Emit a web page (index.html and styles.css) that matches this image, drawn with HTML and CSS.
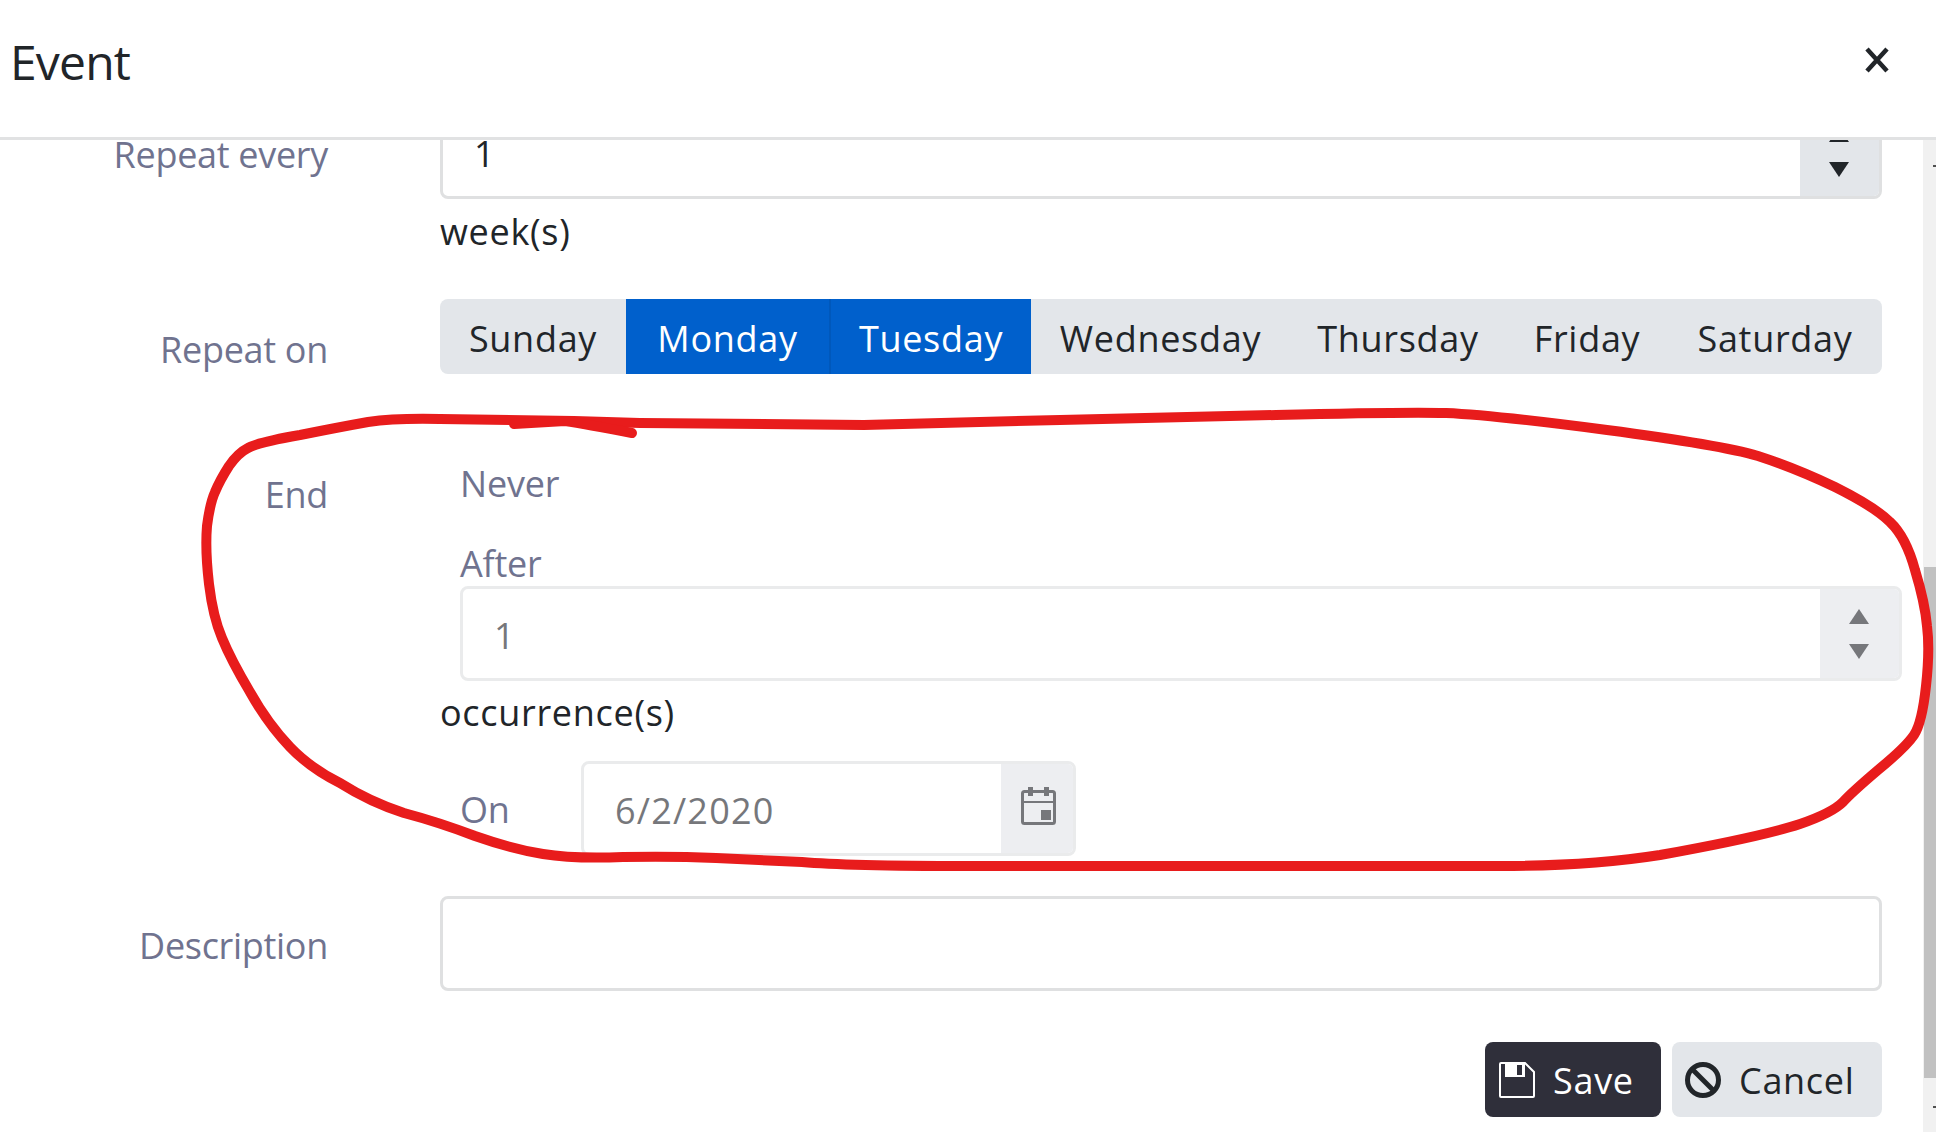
FILE: index.html
```html
<!DOCTYPE html>
<html lang="en">
  <head>
    <title>Event</title>
    <meta charset="utf-8" />
    <link rel="stylesheet" href="styles.css">
  </head>

  <body>
    <header class="modal__header">
      <h5 class="modal__title">Event</h5>
      <button class="modal__close" type="button" aria-label="Close">
        <svg width="26" height="26" viewBox="0 0 26 26"><path d="M3 2 L23 24 M23 2 L3 24" stroke="#212529" stroke-width="4.5" fill="none" /></svg>
      </button>
    </header>

    <div class="modal__main">
      <div class="modal__body">
        <form class="form">
          <div class="form__row">
            <label class="form__label">Repeat every</label>
            <div>
              <div class="field">
                <input class="field__input" type="text" value="1" />
                <div class="spinner">
                  <span class="spinner__up"></span>
                  <span class="spinner__down"></span>
                </div>
              </div>
              <div class="form__unit">week(s)</div>
            </div>
          </div>

          <div class="form__row">
            <label class="form__label">Repeat on</label>
            <div class="days">
              <button class="days__item" type="button">Sunday</button>
              <button class="days__item days__item--on" type="button">Monday</button>
              <button class="days__item days__item--on" type="button">Tuesday</button>
              <button class="days__item" type="button">Wednesday</button>
              <button class="days__item" type="button">Thursday</button>
              <button class="days__item" type="button">Friday</button>
              <button class="days__item" type="button">Saturday</button>
            </div>
          </div>

          <div class="form__row form__row--end">
            <label class="form__label form__label--end">End</label>
            <div class="end">
              <div class="end__option">Never</div>
              <div class="end__option end__option--after">After</div>
              <div class="field field--off field--after">
                <input class="field__input" type="text" value="1" disabled />
                <div class="spinner">
                  <span class="spinner__up"></span>
                  <span class="spinner__down"></span>
                </div>
              </div>
              <div class="form__unit end__unit">occurrence(s)</div>
              <div class="end__on">
                <div class="end__option end__option--on">On</div>
                <div class="field field--off field--date">
                  <input class="field__input" type="text" value="6/2/2020" disabled />
                  <div class="field__addon">
                    <svg class="field__icon" width="36" height="38" viewBox="0 0 36 38" fill="none" stroke="#76777b">
                      <rect x="1.5" y="4.5" width="32" height="32" rx="2" stroke-width="3" />
                      <path d="M1.5 15 H33.5" stroke-width="2" />
                      <path d="M9.5 0 V9 M25.5 0 V9" stroke-width="5" />
                      <rect x="20" y="23" width="10" height="10" fill="#76777b" stroke="none" />
                    </svg>
                  </div>
                </div>
              </div>
            </div>
          </div>

          <div class="form__row">
            <label class="form__label form__label--desc">Description</label>
            <div class="field">
              <input class="field__input" type="text" />
            </div>
          </div>

          <div class="actions">
            <button class="btn btn--save" type="button">
              <svg width="36" height="36" viewBox="0 0 36 36" fill="none" stroke="#fff" stroke-width="2">
                <path d="M2 1 H26 L35 10 V34 A1 1 0 0 1 34 35 H2 A1 1 0 0 1 1 34 V2 A1 1 0 0 1 2 1 Z" />
                <path d="M6 1 V15 H26 V1" fill="#fff" stroke="none" />
                <rect x="18" y="3" width="5" height="10" fill="#2f2f3a" stroke="none" />
              </svg>
              <span class="btn__text">Save</span>
            </button>
            <button class="btn btn--cancel" type="button">
              <svg width="36" height="36" viewBox="0 0 36 36" fill="none" stroke="#212529" stroke-width="5">
                <circle cx="18" cy="18" r="15.5" />
                <path d="M7 7 L29 29" />
              </svg>
              <span class="btn__text">Cancel</span>
            </button>
          </div>
        </form>
      </div>

      <div class="scrollbar">
        <span class="scrollbar__tick"></span>
        <div class="scrollbar__thumb"></div>
        <span class="scrollbar__tick scrollbar__tick--low"></span>
      </div>
    </div>

    <!-- hand drawn marking on top of the screenshot -->
    <svg class="scribble" width="1936" height="1132" viewBox="0 0 1936 1132" fill="none" stroke="#e81c1c" stroke-width="10" stroke-linecap="round" stroke-linejoin="round">
      <path d="M574 421 L440 419 Q395 418 368 422 Q340 427 300 435 Q259 442 248 448 Q238 453 229 466 Q220 480 215 492 Q210 503 207 526 Q205 550 209 584 Q213 617 222 638 Q231 660 250 692 Q268 724 290 747 Q310 768 340 783 Q370 802 404 813 Q438 822 475 836 Q512 849 543 854 Q574 859 623 857 Q673 856 716 858 Q759 860 802 862 Q846 866 968 866 L1500 866 Q1590 866 1660 855 Q1760 837 1800 824 Q1832 813 1843 802 Q1851 793 1878 770 Q1906 747 1914 735 Q1922 723 1926 686 Q1930 650 1927 626 Q1925 603 1915 570 Q1906 537 1890 522 Q1875 507 1835 487 Q1795 468 1758 456 Q1721 445 1607 430 Q1493 415 1446 413 Q1400 412 1276 415 Q1153 418 1060 420 L864 425 L640 423 L574 421" />
      <path d="M514 424 L565 421 Q585 424 632 433" />
    </svg>
  </body>
</html>
```

FILE: styles.css
```css
html, body {
  margin: 0;
  height: 100%;
  overflow: hidden;
  background: #fff;
}

body {
  display: flex;
  flex-direction: column;
  position: relative;
  font-family: "Open Sans", sans-serif;
  font-size: 36px;
  line-height: 48px;
  color: #212529;
}

button, input {
  font: inherit;
}

.modal__header {
  display: flex;
  justify-content: space-between;
  align-items: flex-start;
  height: 137px;
  padding: 0 46px 0 10px;
  border-bottom: 3px solid #e1e2e3;
  position: relative;
  z-index: 2;
  background: #fff;
}

.modal__title {
  margin: 30px 0 0;
  font-size: 48px;
  line-height: 64px;
  font-weight: 400;
  letter-spacing: -.8px;
}

.modal__close {
  margin-top: 47px;
  padding: 0;
  border: 0;
  background: none;
  line-height: 0;
}

.modal__main {
  flex: 1;
  display: flex;
  min-height: 0;
}

.modal__body {
  flex: 1;
  overflow: hidden;
}

/* the body is scrolled down a little, first row slides under the header */
.form {
  margin-top: -36px;
  padding-right: 41px;
}

.form__row {
  display: grid;
  grid-template-columns: 328px 1fr;
  column-gap: 112px;
  margin-bottom: 43px;
}

.form__row--end {
  margin-bottom: 40px;
}

.form__label {
  padding-top: 27px;
  text-align: right;
  color: #70738f;
  letter-spacing: -.3px;
}

.form__label--end {
  padding-top: 54px;
}

.form__label--desc {
  padding-top: 26px;
}

.form__unit {
  margin-top: 9px;
  letter-spacing: .7px;
}

.field {
  display: flex;
  box-sizing: border-box;
  height: 95px;
  border: 3px solid #dfe0e1;
  border-radius: 8px;
  background: #fff;
}

.field__input {
  flex: 1;
  min-width: 0;
  padding: 5px 0 0 31px;
  border: 0;
  outline: 0;
  background: none;
  color: #212529;
}

.field--off {
  border-color: #eaebec;
}

.field--off .field__input {
  color: #76777b;
}

.field--date .field__input {
  letter-spacing: 1.2px;
}

.field--off .spinner, .field__addon {
  background: #edeef1;
}

.field--off .spinner__up {
  border-bottom-color: #76777b;
}

.field--off .spinner__down {
  border-top-color: #76777b;
}

.spinner {
  display: flex;
  flex-direction: column;
  align-items: center;
  justify-content: center;
  gap: 20px;
  box-sizing: border-box;
  width: 79px;
  padding-right: 2px;
  background: #e3e6ea;
  border-radius: 0 5px 5px 0;
}

.spinner__up, .spinner__down {
  border-left: 10px solid transparent;
  border-right: 10px solid transparent;
}

.spinner__up {
  border-bottom: 15px solid #212529;
}

.spinner__down {
  border-top: 15px solid #212529;
}

.days {
  display: grid;
  grid-template-columns: 186px 203px 202px 259px 216px 162px 214px;
  height: 75px;
  border-radius: 8px;
  overflow: hidden;
  background: #e3e6ea;
}

.days__item {
  padding: 4px 0 0;
  border: 0;
  background: none;
  color: #212529;
  letter-spacing: .7px;
}

.days__item--on {
  background: #0060cc;
  color: #fff;
}

.days__item--on + .days__item--on {
  border-left: 2px solid #0058bb;
}

.end {
  padding: 43px 0 0 20px;
  margin-right: -20px;
}

.end__option {
  color: #70738f;
  letter-spacing: -.2px;
}

.end__option--after {
  margin-top: 32px;
}

.field--after {
  margin-top: -2px;
}

.end__unit {
  margin-left: -20px;
  margin-top: 8px;
}

.end__on {
  display: flex;
  align-items: center;
  margin-top: 24px;
}

.end__option--on {
  width: 121px;
  margin-top: 2px;
}

.field--date {
  width: 495px;
}

.field__addon {
  display: flex;
  align-items: center;
  justify-content: center;
  width: 72px;
  padding-left: 3px;
  box-sizing: border-box;
  border-radius: 0 5px 5px 0;
}

.field__icon {
  margin-top: -6px;
}

.actions {
  display: flex;
  justify-content: flex-end;
  gap: 11px;
  margin-top: 51px;
}

.btn {
  display: flex;
  align-items: center;
  box-sizing: border-box;
  height: 75px;
  border: 0;
  border-radius: 8px;
  padding: 0;
  letter-spacing: .7px;
}

.btn__text {
  padding-top: 3px;
}

.btn--save {
  width: 176px;
  gap: 18px;
  padding-left: 14px;
  background: #2f2f3a;
  color: #fff;
}

.btn--cancel {
  width: 210px;
  gap: 18px;
  padding-left: 13px;
  background: #e3e6ea;
  color: #212529;
}

.scrollbar {
  width: 13px;
  display: flex;
  flex-direction: column;
  background: #f1f1f1;
  overflow: hidden;
}

.scrollbar__tick {
  display: block;
  flex: none;
  width: 3px;
  height: 2px;
  margin: 25px 0 0 auto;
  background: #505050;
}

.scrollbar__thumb {
  flex: none;
  width: 12px;
  height: 511px;
  margin: 400px 0 0 auto;
  background: #c1c1c1;
}

.scrollbar__tick--low {
  margin-top: 28px;
}

.scribble {
  position: absolute;
  top: 0;
  left: 0;
  z-index: 3;
  pointer-events: none;
}
```
